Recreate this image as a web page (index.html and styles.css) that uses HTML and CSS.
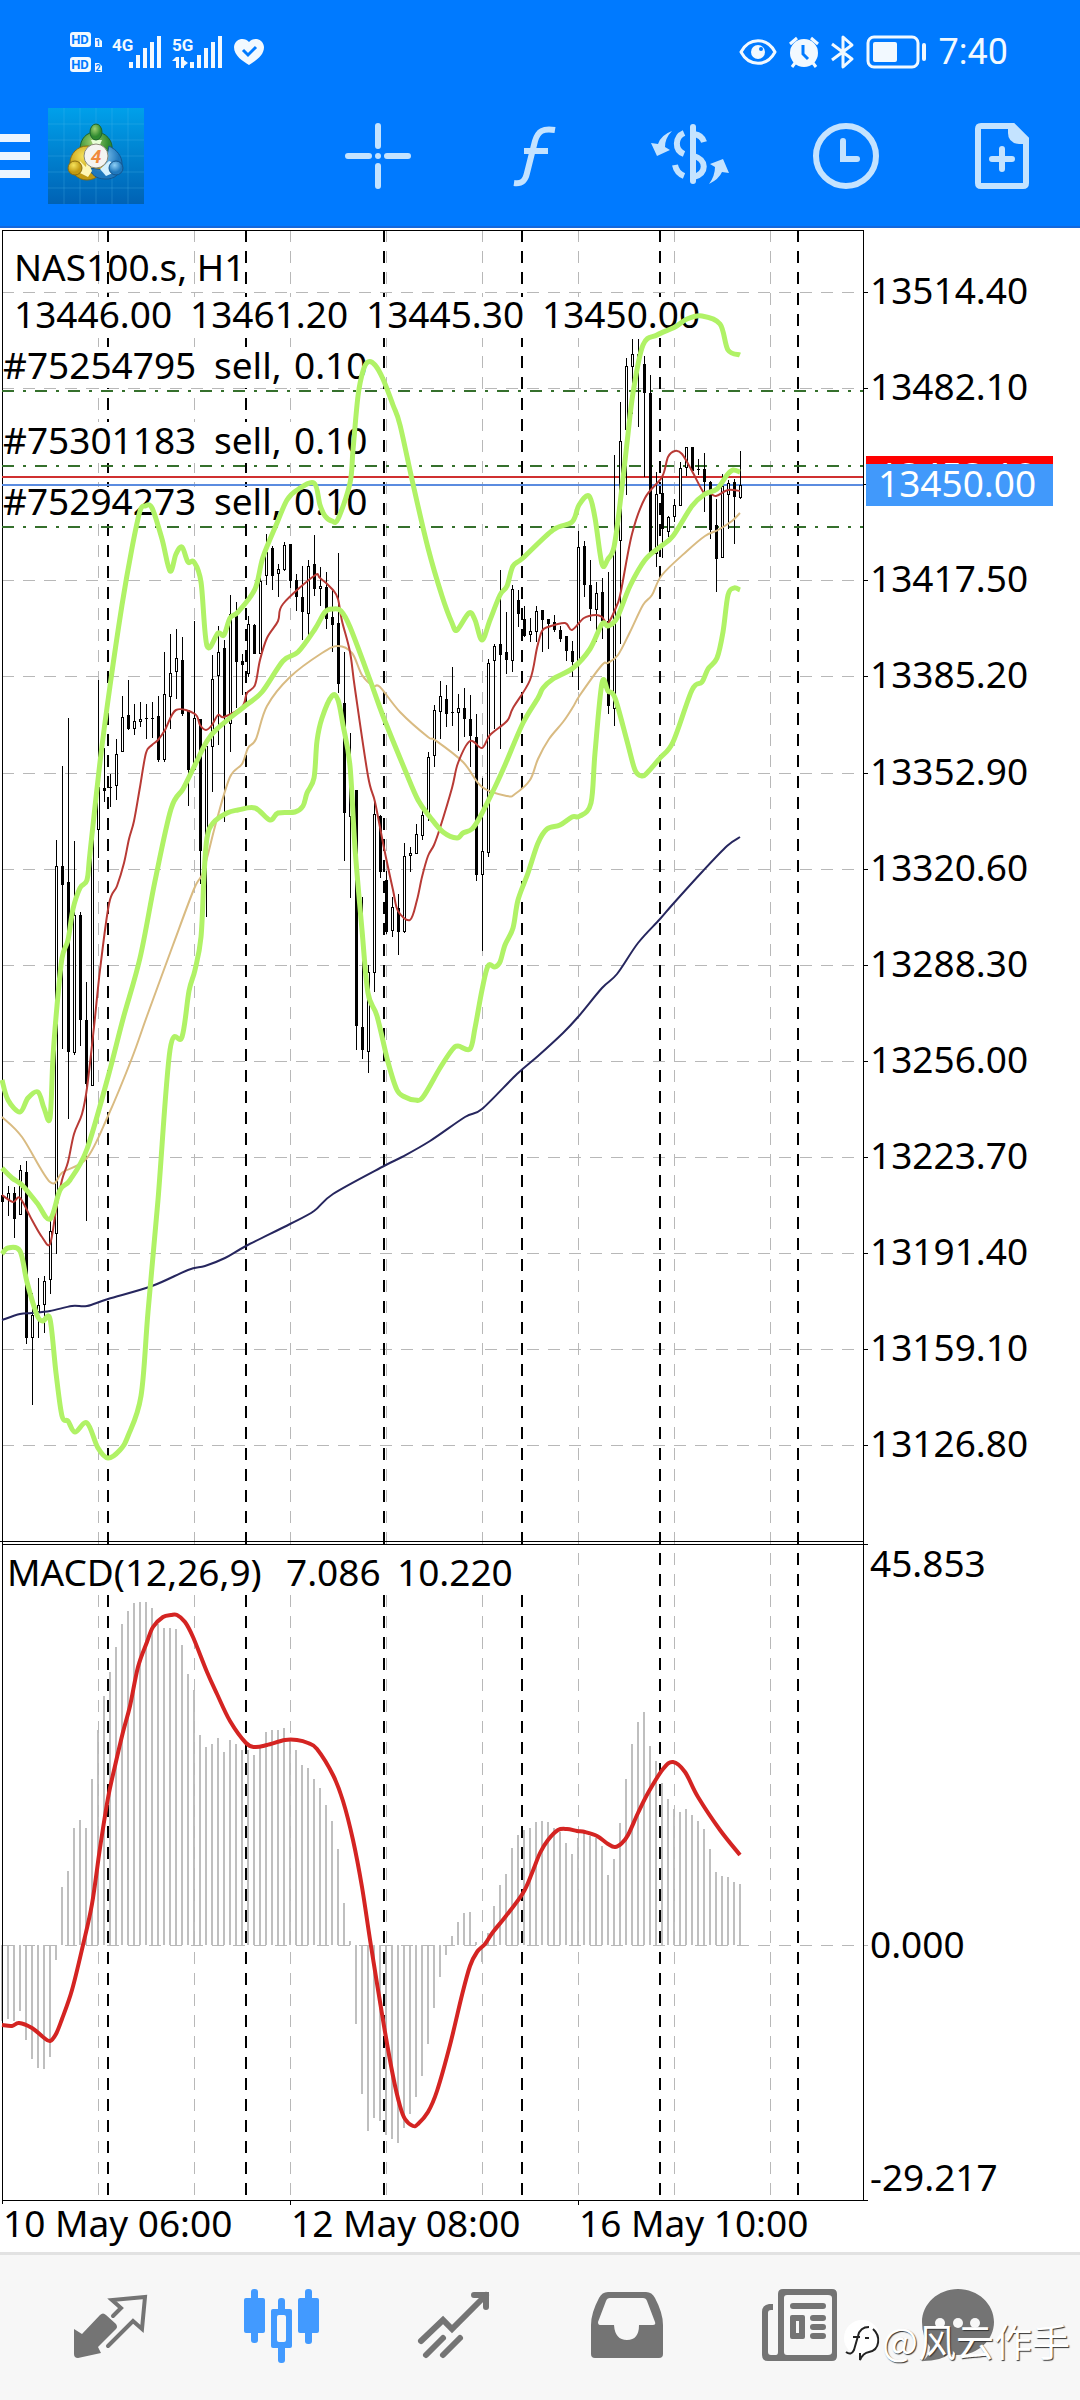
FILE: index.html
```html
<!doctype html>
<html lang="en">
<head>
    <meta charset="UTF-8">
    <meta name="viewport" content="width=device-width, initial-scale=1">
    <title>NAS100.s, H1</title>
    <link rel="stylesheet" href="styles.css">
</head>
<body>
<header class="top">
    <div class="status">
        <svg class="hd" width="32" height="40" viewBox="0 0 32 40">
            <rect x="0" y="0" width="21" height="15" rx="3"/>
            <rect x="0" y="25" width="21" height="15" rx="3"/>
            <path d="M25 6h4l3 3v6h-7zM25 31h4l3 3v6h-7z"/>
            <text x="10" y="12" class="hd-text">HD</text>
            <text x="10" y="37" class="hd-text">HD</text>
            <text x="28" y="14" class="hd-num">1</text>
            <text x="28" y="39" class="hd-num">2</text>
        </svg>
        <svg width="50" height="36" viewBox="0 0 50 36">
            <text x="0" y="17" class="net">4G</text>
            <path d="M17 28h4v6h-4zM24 21h4v13h-4zM31 14h4v20h-4zM38 8h4v26h-4zM45 2h4v32h-4z"/>
        </svg>
        <svg width="51" height="36" viewBox="0 0 51 36">
            <text x="0" y="17" class="net">5G</text>
            <path d="M4 23h3v11h-3v-7h-4zM9 23h3v3l4 3-4 3v2h-3z"/>
            <path d="M18 28h4v6h-4zM25 21h4v13h-4zM32 14h4v20h-4zM39 8h4v26h-4zM46 2h4v32h-4z"/>
        </svg>
        <svg width="32" height="28" viewBox="0 0 32 28">
            <path d="M16 4C20-1 30 0 31 9c0 9-9 14-15 18C10 23 1 18 1 9 2 0 12-1 16 4z"/>
            <path d="M10 12l5 5 8-8" class="cut"/>
        </svg>
        <div class="status-right">
            <svg width="38" height="28" viewBox="0 0 38 28">
                <path d="M2 14C10-1 28-1 36 14 28 29 10 29 2 14z" class="line"/>
                <circle cx="19" cy="14" r="7"/>
                <circle cx="22" cy="11" r="2" class="hole"/>
            </svg>
            <svg width="32" height="32" viewBox="0 0 32 32">
                <circle cx="16" cy="17" r="14"/>
                <path d="M2 8l7-6M30 8l-7-6M7 27l-3 4M25 27l3 4" class="line"/>
                <path d="M15 9v9l5 5" class="cut"/>
            </svg>
            <svg width="24" height="36" viewBox="0 0 24 36">
                <path d="M1 10l20 15-9 8V3l9 8L1 26" class="line"/>
            </svg>
            <svg width="62" height="34" viewBox="0 0 62 34">
                <rect x="2" y="2" width="50" height="30" rx="6" class="line"/>
                <rect x="7" y="7" width="24" height="20" rx="2"/>
                <rect x="56" y="8" width="4" height="18" rx="2"/>
            </svg>
            <span class="time">7:40</span>
        </div>
    </div>
    <div class="toolbar">
        <div class="brand">
            <button class="burger" aria-label="Menu"><i></i><i></i><i></i></button>
            <svg width="96" height="96" viewBox="0 0 96 96">
                <defs>
                    <linearGradient id="sky" x1="0" y1="0" x2="0" y2="1"><stop offset="0" stop-color="#00a0ea"/><stop offset="1" stop-color="#0062b4"/></linearGradient>
                    <radialGradient id="green" cx=".4" cy=".3"><stop offset="0" stop-color="#9fd070"/><stop offset="1" stop-color="#2f8a30"/></radialGradient>
                    <radialGradient id="yellow" cx=".4" cy=".3"><stop offset="0" stop-color="#f6e35c"/><stop offset="1" stop-color="#c29a12"/></radialGradient>
                    <radialGradient id="blue" cx=".4" cy=".3"><stop offset="0" stop-color="#8fd0f6"/><stop offset="1" stop-color="#1f78bd"/></radialGradient>
                </defs>
                <rect width="96" height="96" fill="url(#sky)"/>
                <path d="M0 16h96M0 32h96M0 48h96M0 64h96M0 80h96M16 0v96M32 0v96M48 0v96M64 0v96M80 0v96" stroke="#5cc4ee" stroke-opacity=".25"/>
                <g stroke-width="1">
                    <path d="M32 42c0-12 7-18 16-18s18 8 16 20c-1 7-5 10-8 12l-8-15-7 12c-6-2-9-5-9-11z" fill="url(#green)" stroke="#1d6430"/>
                    <circle cx="39" cy="55" r="17" fill="url(#yellow)" stroke="#8a6d10"/>
                    <path d="M61 38c8 4 13 10 13 18 0 9-8 16-17 15-9 0-14-5-16-11l15 2z" fill="url(#blue)" stroke="#14568f"/>
                    <path d="M32 53l6 6 1-8 5 12-4 6-10-5z" fill="#fff7b5" stroke="none"/>
                    <path d="M61 53l5 2-1 10-7 3-6-7z" fill="#d4f1ff" stroke="none"/>
                    <path d="M43 32h11l-3 7h-5z" fill="#e8ffd8" stroke="none"/>
                    <ellipse cx="48" cy="24" rx="6" ry="8" fill="url(#green)" stroke="#1d6430"/>
                    <circle cx="27" cy="60" r="7" fill="url(#yellow)" stroke="#8a6d10"/>
                    <circle cx="68" cy="60" r="7" fill="url(#blue)" stroke="#14568f"/>
                </g>
                <circle cx="48" cy="48" r="12" fill="#f4f4f2" stroke="#8a8a7a"/>
                <text x="48" y="55" class="logo-num">4</text>
            </svg>
        </div>
        <button class="tool" aria-label="Crosshair">
            <svg width="72" height="72" viewBox="0 0 72 72">
                <path d="M36 6v20M36 46v20M6 36h21M45 36h21"/>
                <circle cx="36" cy="36" r="3" class="solid"/>
            </svg>
        </button>
        <button class="tool" aria-label="Indicators">
            <svg width="60" height="72" viewBox="0 0 60 72">
                <path d="M10 63c7 1 11-1 13-10l8-32C34 11 39 8 51 10M20 31h24" class="flat"/>
            </svg>
        </button>
        <button class="tool" aria-label="Trade">
            <svg width="84" height="72" viewBox="0 0 84 72">
                <path d="M45 7v54"/>
                <path d="M36 13c-9 4-10 17 0 21M27 45c1 5 4 9 9 11M46 14c6 1 9 4 10 8M46 36c13 4 13 17 0 21" class="flat"/>
                <path d="M24 11Q13 15 10 24L3 23l6 13 13-6-5-3q0-9 7-16zM61 64q10-5 13-12l7 1-6-14-13 5 5 3q0 9-6 17z" class="solid"/>
            </svg>
        </button>
        <button class="tool" aria-label="Timeframe">
            <svg width="72" height="72" viewBox="0 0 72 72">
                <circle cx="36" cy="36" r="30"/>
                <path d="M33 21v18h14"/>
            </svg>
        </button>
        <button class="tool" aria-label="New order">
            <svg width="72" height="72" viewBox="0 0 72 72">
                <path d="M15 6h32l13 13v44q0 3-3 3H15q-3 0-3-3V9q0-3 3-3z"/>
                <path d="M42 6h7l12 12v6h-8Q42 23 42 13z" class="solid"/>
                <path d="M36 29v20M26 39h20"/>
            </svg>
        </button>
    </div>
</header>

<main>
    <svg id="chart" class="chart" viewBox="0 228 1080 2024" role="img" aria-label="NAS100.s, H1">
        <g id="bars"></g>
        <g id="grid"></g>
        <g class="mask">
            <rect x="3" y="297" width="706" height="41"/>
            <rect x="3" y="347" width="368" height="41"/>
            <rect x="3" y="422" width="368" height="41"/>
            <rect x="3" y="487" width="368" height="36"/>
            <rect x="3" y="1547" width="526" height="46"/>
        </g>
        <g class="frame">
            <path d="M2 2204V230H863V2200M0 1541H863M2 1544H868M2 2200H868M290 2200v5M578 2200v5"/>
            <path id="ticks"/>
        </g>
        <g class="label">
            <text x="14" y="281">NAS100.s, H1</text>
            <text x="14" y="328">13446.00</text>
            <text x="190" y="328">13461.20</text>
            <text x="366" y="328">13445.30</text>
            <text x="542" y="328">13450.00</text>
            <text x="3" y="379">#75254795</text>
            <text x="214" y="379">sell,</text>
            <text x="294" y="379">0.10</text>
            <text x="3" y="454">#75301183</text>
            <text x="214" y="454">sell,</text>
            <text x="294" y="454">0.10</text>
            <text x="3" y="515">#75294273</text>
            <text x="214" y="515">sell,</text>
            <text x="294" y="515">0.10</text>
            <text x="7" y="1586">MACD(12,26,9)</text>
            <text x="286" y="1586">7.086</text>
            <text x="397" y="1586">10.220</text>
            <text x="870" y="1577">45.853</text>
            <text x="870" y="1958">0.000</text>
            <text x="870" y="2191">-29.217</text>
            <text x="3" y="2237">10 May 06:00</text>
            <text x="291" y="2237">12 May 08:00</text>
            <text x="579" y="2237">16 May 10:00</text>
        </g>
        <g id="prices" class="label"></g>
        <path class="order" d="M2 391H863M2 466H863M2 527H863"/>
        <path class="ask" d="M2 477H863"/>
        <path class="bid" d="M2 485H863"/>
        <g id="candles"></g>
        <g id="lines"></g>
        <rect x="866" y="456" width="187" height="42" fill="#ff0000"/>
        <text x="878" y="489" class="badge">13453.10</text>
        <rect x="866" y="464" width="187" height="42" fill="#4199fb"/>
        <text x="878" y="497" class="badge">13450.00</text>
    </svg>
</main>

<nav class="tabs">
    <a href="#quotes" aria-label="Quotes">
        <svg width="96" height="96" viewBox="0 0 96 96">
            <path d="M12 49l8 5 18-19q3-3 6 0l10 9q2 3 0 5L36 67l3 6-23 5q-4 0-4-4z" class="fill"/>
            <path d="M51 36l8-8-9-8 33-3-3 32-9-8-25 25" class="thin"/>
        </svg>
    </a>
    <a href="#chart" aria-label="Chart" class="on">
        <svg width="96" height="96" viewBox="0 0 96 96">
            <rect x="17" y="9" width="7" height="54" rx="3" class="fill"/>
            <rect x="10" y="18" width="21" height="35" rx="2" class="fill"/>
            <rect x="71" y="9" width="7" height="55" rx="3" class="fill"/>
            <rect x="64" y="18" width="21" height="35" rx="2" class="fill"/>
            <rect x="44" y="18" width="7" height="65" rx="3" class="fill"/>
            <rect x="37" y="29" width="21" height="39" rx="2" class="fill"/>
            <rect x="43" y="35" width="9" height="27" rx="2" class="paper"/>
        </svg>
    </a>
    <a href="#trade" aria-label="Trade">
        <svg width="96" height="96" viewBox="0 0 96 96">
            <path d="M15 61l22-21 9 9 34-34M68 15h12v12M20 75l17-17M37 75l17-17" class="thick"/>
        </svg>
    </a>
    <a href="#history" aria-label="History">
        <svg width="96" height="96" viewBox="0 0 96 96">
            <path fill-rule="evenodd" class="fill" d="M30 12h38q6 0 9 6 8 15 8 27v29q0 4-4 4H17q-4 0-4-4V45q0-12 8-27 3-6 9-6zM32 18q-3 0-4 3l-8 21q0 3 2 3h14q1 15 13 15t12-15h14q3 0 2-3l-8-21q-1-3-4-3z"/>
        </svg>
    </a>
    <a href="#news" aria-label="News">
        <svg width="96" height="96" viewBox="0 0 96 96">
            <path fill-rule="evenodd" class="fill" d="M33 9h49q5 0 5 5v62q0 5-5 5H18q-6 0-6-6V32q0-7 7-8h4v6h-2q-3 0-3 3v39q0 3 3 3h5q2 0 2-3V14q0-5 5-5zM37 15q-3 0-3 3v54q0 3 3 3h41q4 0 4-3V18q0-3-4-3z"/>
            <path fill-rule="evenodd" class="fill" d="M42 35h11q2 0 2 2v20q0 2-2 2H42q-2 0-2-2V37q0-2 2-2zM46 41v12h3V41z"/>
            <path d="M43 26h30M63 38h10M63 47h10M63 56h10" class="thick"/>
        </svg>
    </a>
    <a href="#messages" aria-label="Messages">
        <svg width="96" height="96" viewBox="0 0 96 96">
            <path d="M36 9c20 0 36 15 36 33S56 75 36 75q-5 0-9-1-8 7-26 7 7-6 7-14-8-10-8-25C0 24 16 9 36 9z" class="fill"/>
            <circle cx="18" cy="43" r="5" class="paper"/>
            <circle cx="36" cy="43" r="5" class="paper"/>
            <circle cx="53" cy="43" r="5" class="paper"/>
        </svg>
    </a>
    <div class="watermark">
        <svg width="40" height="44" viewBox="0 0 40 44">
            <circle cx="20" cy="20" r="18" fill="#fff"/>
            <path d="M4 34q5 4 8-2l4-14q2-9 11-9M11 19h7M23 20h4M31 11c8 7 7 21-4 23q-6 1-9 8v-7" fill="none" stroke="#222" stroke-width="2"/>
        </svg>
        <span>@风云作手</span>
    </div>
</nav>
<script src="chart.js"></script>
</body>
</html>
```
FILE: styles.css
```css
* {margin: 0; padding: 0; box-sizing: border-box;}
body {background: #fff; font-family: "Noto Sans", "Noto Sans CJK SC", sans-serif; color: #000;}
svg {display: block; flex: none;}
button {border: 0; background: none; cursor: pointer;}

/* header */
.top {background: #007aff; border-bottom: 2px solid #1468dc;}
.status {display: flex; align-items: center; gap: 10px; height: 104px; padding: 0 72px 0 70px; fill: #f2f9ff;}
.status .line {fill: none; stroke: #f2f9ff; stroke-width: 3; stroke-linejoin: round;}
.status .cut {fill: none; stroke: #007aff; stroke-width: 3;}
.status .hole {fill: #007aff;}
.status-right {display: flex; align-items: center; gap: 11px; margin-left: auto;}
.hd-text {font: 700 13px Roboto, sans-serif; fill: #007aff; text-anchor: middle;}
.hd-num {font: 700 9px Roboto, sans-serif; fill: #007aff; text-anchor: middle;}
.net {font: 700 17px Roboto, sans-serif;}
.time {font: 400 36px/40px Roboto, sans-serif; color: #f2f9ff;}
.toolbar {display: flex; align-items: center; height: 104px; margin-bottom: 18px;}
.brand {display: flex; align-items: center; gap: 18px; width: 300px;}
.burger {display: flex; flex-direction: column; gap: 10px; width: 30px;}
.burger i {width: 30px; height: 8px; background: #ebf5ff;}
.logo-num {font: italic 700 19px Roboto, sans-serif; fill: #f08a3c; text-anchor: middle;}
.tool {display: flex; flex: 1; justify-content: center;}
.tool svg {fill: none; stroke: #c4e3ff; stroke-width: 6; stroke-linecap: round;}
.tool .flat {stroke-linecap: butt;}
.tool .solid {fill: #c4e3ff; stroke: none;}

/* chart */
.chart {width: 100%; height: auto;}
.label {font-size: 37px;}
.badge {font-size: 37px; fill: #fff;}
.mask {fill: #fff;}
.frame {fill: none; stroke: #000; stroke-width: 1; shape-rendering: crispEdges;}
.grid-line {fill: none; stroke: #b8b8b8; stroke-width: 1; stroke-dasharray: 12 9; shape-rendering: crispEdges;}
.day-line {fill: none; stroke: #000; stroke-width: 2; stroke-dasharray: 12 9; shape-rendering: crispEdges;}
.order {fill: none; stroke: #35702c; stroke-width: 2; stroke-dasharray: 12 9 3 9; shape-rendering: crispEdges;}
.ask {stroke: #d03030; stroke-width: 2; shape-rendering: crispEdges;}
.bid {stroke: #5b8ce0; stroke-width: 2; shape-rendering: crispEdges;}
.wick {fill: none; stroke: #000; stroke-width: 1; shape-rendering: crispEdges;}
.up {fill: #fff; stroke: #000; stroke-width: 1; shape-rendering: crispEdges;}
.down {fill: #000; stroke: #000; stroke-width: 1; shape-rendering: crispEdges;}
.bar {stroke: #bfbfbf; stroke-width: 2; shape-rendering: crispEdges;}
.band, .fast, .slow, .trend, .signal {fill: none; stroke-linejoin: round;}
.band {stroke: #b0f266; stroke-width: 5;}
.fast {stroke: #b83a35; stroke-width: 2;}
.slow {stroke: #d9bb82; stroke-width: 2;}
.trend {stroke: #26265e; stroke-width: 2;}
.signal {stroke: #d42422; stroke-width: 4;}

/* tab bar */
.tabs {position: relative; display: flex; align-items: center; height: 148px; padding: 0 24px; background: #f7f7f7; border-top: 3px solid #e2e2e2;}
.tabs a {display: flex; flex: 1; justify-content: center; color: #747474;}
.tabs .on {color: #429aff;}
.tabs .fill {fill: currentColor;}
.tabs .paper {fill: #f7f7f7;}
.tabs .thin, .tabs .thick {fill: none; stroke: currentColor; stroke-linecap: round;}
.tabs .thin {stroke-width: 4;}
.tabs .thick {stroke-width: 6;}
.watermark {position: absolute; right: 10px; bottom: 34px; display: flex; align-items: center; font: 400 38px/52px "Noto Sans CJK SC", sans-serif; color: #fff; text-shadow: 1px 1px 1px #333; pointer-events: none;}
```
FILE: chart.js
```js
var NS = 'http://www.w3.org/2000/svg';
var STEP = 6;
var LEFT = 2;
var ZERO = 1945;   // MACD zero line
var SCALE = 8.76;  // MACD pixels per unit

function add(parent, name, attrs, text) {
    var el = document.createElementNS(NS, name);
    for (var key in attrs) {
        el.setAttribute(key, attrs[key]);
    }
    if (text) {
        el.textContent = text;
    }
    document.getElementById(parent).appendChild(el);
}

// curve through all points, handles are a sixth of the neighbour distance
function smooth(points) {
    var p = points.split(' ').map(function (s) {
        return s.split(',').map(Number);
    });
    var d = 'M' + p[0];
    for (var i = 0; i < p.length - 1; i++) {
        var a = p[i - 1] || p[i], b = p[i], c = p[i + 1], e = p[i + 2] || c;
        d += 'C' + [b[0] + (c[0] - a[0]) / 6, b[1] + (c[1] - a[1]) / 6,
            c[0] - (e[0] - b[0]) / 6, c[1] - (e[1] - b[1]) / 6, c[0], c[1]];
    }
    return d;
}

// high, body top, body bottom, low, 1 = rising
var candles = [
    [1185,1195,1202,1202,0],[1186,1193,1200,1216,1],[1187,1193,1219,1238,0],[1165,1170,1215,1215,1],[1161,1172,1338,1344,0],
    [1293,1315,1338,1405,1],[1278,1305,1312,1338,1],[1276,1281,1305,1333,1],[1219,1231,1280,1294,1],[840,866,1234,1254,1],
    [766,866,885,1049,0],[718,882,1052,1119,0],[841,915,1053,1055,1],[912,915,1020,1046,0],[982,1020,1084,1221,0],
    [834,834,1086,1086,1],[680,787,830,858,1],[748,788,791,802,0],[774,787,788,807,0],[739,754,786,800,1],
    [696,717,752,752,1],[680,715,729,730,0],[704,721,729,735,1],[702,719,722,727,1],[704,718,719,739,0],
    [702,718,719,738,0],[696,716,760,762,0],[652,694,760,762,1],[634,673,697,729,1],[629,658,672,699,1],
    [637,660,714,716,0],[710,710,770,806,0],[621,718,770,771,1],[719,719,851,884,0],[743,746,845,917,1],
    [655,679,747,792,1],[626,652,676,745,1],[640,648,716,822,0],[595,614,724,752,1],[602,614,662,708,0],
    [654,661,665,695,0],[616,624,674,677,1],[624,625,654,654,0],[575,581,654,654,1],[534,552,576,585,1],
    [546,548,576,590,0],[564,569,574,597,1],[542,545,570,571,1],[544,544,581,588,0],[574,580,597,611,0],
    [566,597,612,640,0],[560,566,614,635,1],[535,564,589,596,0],[567,586,589,606,1],[572,587,619,629,0],
    [589,617,625,652,0],[553,623,684,693,0],[652,703,813,861,0],[733,780,817,898,1],[790,790,1026,1050,0],
    [897,1027,1050,1059,0],[965,972,1052,1073,1],[799,814,973,992,1],[815,816,872,878,0],[871,880,932,934,0],
    [897,907,931,937,1],[894,908,932,955,0],[843,856,932,933,1],[847,853,856,872,1],[824,834,854,854,1],
    [811,815,836,840,1],[752,757,816,821,1],[705,710,756,767,1],[681,696,712,739,1],[685,699,714,727,0],
    [667,712,713,726,0],[694,708,713,751,1],[688,708,719,737,0],[695,719,736,767,0],[714,737,875,881,0],
    [778,851,875,951,1],[659,663,853,857,1],[644,646,661,729,1],[570,644,655,749,0],[612,652,660,674,0],
    [585,589,661,672,1],[590,600,614,627,0],[606,619,636,637,0],[618,631,635,642,1],[606,611,632,642,1],
    [610,610,620,652,0],[619,619,624,649,0],[615,622,630,632,0],[626,630,639,642,0],[636,636,651,661,0],
    [641,651,662,677,0],[531,547,664,690,1],[541,546,585,597,0],[560,585,609,621,0],[582,593,610,642,1],
    [578,592,621,639,0],[572,621,706,714,0],[455,547,709,726,1],[402,441,541,644,1],[358,366,430,495,1],
    [339,354,367,414,1],[339,354,358,427,0],[356,364,393,477,0],[375,393,553,553,0],[472,494,554,567,1],
    [477,493,529,558,0],[516,517,532,537,1],[499,505,517,522,1],[462,468,506,506,1],[447,447,468,476,1],
    [447,447,471,471,0],[459,469,470,475,0],[453,469,482,512,0],[481,482,530,539,0],[499,525,559,592,0],
    [474,486,558,558,1],[480,483,495,529,1],[479,482,497,544,0],[451,485,498,499,1]
];

var macd = [
    -8.7,-8.5,-8.7,-7.5,-10.9,-13,-14,-14.2,-12.8,-1.7,6.6,8.4,13.4,14.3,13.3,19,24.5,28.4,31.2,34,36.7,38.1,39,39.2,39.1,
    38.5,36.6,36.2,36.2,36.1,34.2,30.9,29.1,24,22.6,22.9,23.6,22,23.4,23,22.3,22.3,21.7,22.5,24.3,24.5,24.5,24.8,23.6,22.3,
    20.6,20.2,19,17.9,16,14.2,11,4.8,0.5,-9,-17,-21.2,-19.8,-20.1,-21.7,-22.1,-22.6,-20.9,-19.3,-17.3,-14.9,-11.3,-7.2,-3.6,
    -1.1,1,2.6,3.6,3.8,0.3,-1.9,1.4,4.5,6.8,8.1,11.1,12.6,13.1,13.4,14,14.2,14,13.4,12.9,11.7,10.4,12.2,12.8,12.4,12.2,11.3,
    8,9.8,13.9,18.9,22.9,25.5,26.6,22.7,21,18.5,16.7,15.5,15.2,15.5,14.8,14.2,13.2,11,8.3,7.9,7.8,7.2,7
];

var lines = [
    ['trend', '2,1320 20,1314 32,1313 50,1311 72,1306 87,1306 108,1299 152,1286 188,1270 205,1266 225,1258 246,1246 290,1224 314,1211 333,1194 384,1166 402,1157 430,1141 465,1117 482,1109 517,1074 538,1056 563,1033 578,1017 602,988 617,974 638,943 660,919 673,904 702,872 727,846 740,837'],
    ['slow', '2,1117 22,1137 50,1182 63,1172 87,1158 108,1116 132,1058 147,1016 173,945 194,889 202,875 207,858 217,819 230,777 242,764 248,748 256,739 267,706 290,677 322,653 338,646 352,653 362,675 373,686 380,687 400,712 428,737 435,740 463,762 482,787 507,796 515,794 530,780 538,759 549,739 563,722 573,707 580,695 602,665 608,663 618,655 630,632 643,605 652,595 662,575 687,551 705,536 718,530 732,521 740,513'],
    ['fast', '2,1195 13,1202 20,1198 32,1220 42,1237 50,1244 56,1210 62,1180 68,1162 74,1134 82,1114 87,1088 94,1027 100,970 109,904 117,886 124,863 129,839 134,821 140,787 146,753 152,745 158,740 165,730 176,710 195,714 200,725 206,730 212,725 218,715 224,717 242,707 247,693 255,685 260,660 267,638 278,621 283,604 314,576 320,578 333,590 338,599 342,621 350,652 355,689 368,776 375,802 384,848 393,890 398,911 410,920 417,900 422,877 428,856 434,845 440,828 452,788 458,763 470,741 482,748 490,735 507,721 513,708 530,680 537,648 542,631 548,627 565,623 572,630 584,618 596,615 602,617 608,623 617,605 621,591 632,534 645,498 662,477 668,457 675,451 682,454 692,471 704,493 710,493 716,496 728,490 740,491'],
    ['band', '2,1080 8,1100 20,1112 28,1098 38,1092 44,1108 50,1118 53,1057 57,1006 62,958 68,940 73,909 80,888 87,880 90,853 100,762 110,686 122,605 132,548 140,511 145,506 152,508 162,539 170,571 176,554 182,547 188,562 194,562 201,582 207,646 218,633 224,635 230,618 238,612 255,589 263,557 277,523 287,500 297,490 314,483 320,505 325,516 332,521 338,519 350,483 353,450 358,396 363,371 368,362 375,365 383,379 393,405 400,425 413,484 428,548 442,596 452,623 457,630 469,613 475,620 482,640 490,620 500,595 507,586 513,566 523,558 553,530 572,522 579,505 589,496 595,518 602,564 608,559 614,547 620,504 627,443 633,393 643,345 657,335 675,327 687,319 702,316 720,324 728,350 740,355'],
    ['band', '2,1168 12,1178 22,1185 37,1203 50,1219 60,1190 70,1180 87,1149 108,1077 123,1019 140,958 155,881 171,809 183,789 193,769 207,741 218,728 245,706 262,692 283,661 298,652 315,629 325,612 333,609 341,611 350,627 370,680 383,716 405,770 418,800 430,817 443,832 457,838 463,833 472,829 480,817 495,787 505,765 523,723 538,698 543,688 553,679 573,668 590,649 602,624 608,626 617,618 630,586 645,560 660,547 673,536 692,506 705,494 717,489 727,475 733,470 740,472'],
    ['band', '2,1254 8,1248 20,1251 27,1282 37,1315 43,1321 50,1319 56,1373 62,1416 68,1421 75,1432 87,1423 98,1448 108,1458 120,1450 128,1436 141,1396 148,1312 158,1200 170,1050 182,1037 189,991 195,970 201,937 204,876 207,838 213,823 227,813 238,810 255,808 270,820 278,813 295,812 303,806 307,793 314,778 317,741 322,718 332,696 338,700 343,725 350,766 355,848 362,930 368,993 377,1016 388,1062 397,1090 405,1097 415,1100 423,1097 440,1068 452,1050 458,1046 470,1049 475,1028 482,990 488,966 495,967 500,962 505,945 513,928 518,900 528,873 538,843 547,829 560,825 572,817 580,816 591,803 595,753 602,683 608,691 615,698 627,741 635,770 642,776 647,773 660,758 673,742 692,690 702,682 708,669 717,658 723,632 728,595 734,588 740,590'],
    ['signal', '2,2025 12,2026 19,2023 32,2028 43,2037 50,2041 56,2034 62,2019 72,1990 83,1945 92,1904 100,1848 108,1798 115,1766 123,1732 130,1706 138,1667 147,1642 153,1627 163,1617 171,1615 177,1615 185,1622 193,1637 207,1672 217,1694 230,1721 246,1743 255,1747 267,1745 285,1740 297,1740 308,1743 317,1749 333,1775 343,1801 353,1840 362,1887 371,1946 384,2026 393,2076 400,2106 405,2119 413,2126 418,2124 428,2112 437,2091 450,2045 462,1995 470,1966 477,1952 485,1944 493,1932 506,1916 523,1893 532,1873 540,1853 548,1840 558,1830 567,1829 577,1831 585,1832 597,1836 608,1844 615,1847 622,1843 628,1835 638,1813 648,1793 663,1769 673,1762 685,1772 698,1797 720,1830 740,1855']
];

var prices = ['13514.40', '13482.10', '', '13417.50', '13385.20', '13352.90', '13320.60',
    '13288.30', '13256.00', '13223.70', '13191.40', '13159.10', '13126.80'];

// price rows and their ticks
var ticks = '';
for (var i = 0; i < prices.length; i++) {
    var y = Math.round(292 + i * 96.1);
    ticks += 'M863 ' + y + 'h5';
    add('grid', 'path', {'class': 'grid-line', d: 'M2 ' + y + 'H863'});
    if (prices[i]) {
        add('prices', 'text', {x: 870, y: y + 12}, prices[i]);
    }
}
document.getElementById('ticks').setAttribute('d', ticks);
add('grid', 'path', {'class': 'grid-line', d: 'M2 ' + ZERO + 'H868'});

for (var gx = 98; gx < 863; gx += 96) {
    add('grid', 'path', {'class': 'grid-line', d: 'M' + gx + ' 230V2200'});
}
// day separators
for (var dx = 108; dx < 863; dx += 138) {
    add('grid', 'path', {'class': 'day-line', d: 'M' + dx + ' 230V2200'});
}

candles.forEach(function (c, n) {
    var x = LEFT + n * STEP;
    add('candles', 'path', {'class': 'wick', d: 'M' + (x + 0.5) + ' ' + c[0] + 'V' + c[3]});
    add('candles', 'rect', {'class': c[4] ? 'up' : 'down', x: x - 0.5, y: c[1] + 0.5, width: 2, height: Math.max(c[2] - c[1] - 1, 0.1)});
});

macd.forEach(function (v, n) {
    var x = LEFT + n * STEP;
    add('bars', 'path', {'class': 'bar', d: 'M' + x + ' ' + ZERO + 'V' + Math.round(ZERO - v * SCALE)});
});

lines.forEach(function (l) {
    add('lines', 'path', {'class': l[0], d: smooth(l[1])});
});
```
